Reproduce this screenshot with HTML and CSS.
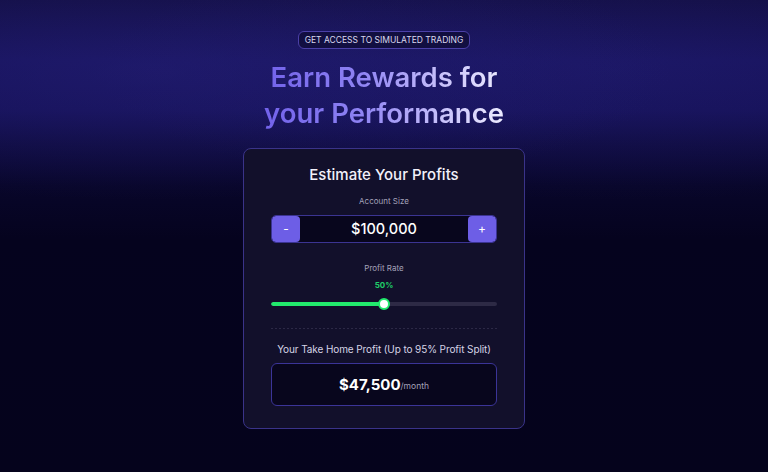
FILE: index.html
```html
<!DOCTYPE html>
<html lang="en">
<head>
<meta charset="utf-8">
<title>Earn Rewards for your Performance</title>
<link rel="stylesheet" href="styles.css">
</head>
<body>
<main class="page">
  <div class="pill">GET ACCESS TO SIMULATED TRADING</div>
  <h1 class="headline">Earn Rewards for<br>your Performance</h1>
  <section class="card">
    <h2 class="card-title">Estimate Your Profits</h2>
    <div class="label">Account Size</div>
    <div class="stepper">
      <button class="step-btn">-</button>
      <div class="step-value">$100,000</div>
      <button class="step-btn">+</button>
    </div>
    <div class="label label-rate">Profit Rate</div>
    <div class="rate">50%</div>
    <div class="slider">
      <div class="track">
        <div class="fill" style="width:50%"></div>
      </div>
      <div class="thumb" style="left:50%"></div>
    </div>
    <div class="divider"></div>
    <div class="take-home">Your Take Home Profit (Up to 95% Profit Split)</div>
    <div class="result">
      <span class="amount">$47,500</span><span class="per">/month</span>
    </div>
  </section>
</main>
</body>
</html>
```
FILE: styles.css
```css
* { box-sizing: border-box; }
html, body { margin: 0; padding: 0; }
body {
  width: 768px;
  height: 472px;
  overflow: hidden;
  font-family: "Inter", "Open Sans", sans-serif;
  color: #fff;
  background:
    radial-gradient(ellipse 520px 130px at 20% 70px, rgba(40, 34, 125, 0.45), rgba(40, 34, 125, 0) 100%),
    radial-gradient(ellipse 520px 130px at 80% 70px, rgba(40, 34, 125, 0.35), rgba(40, 34, 125, 0) 100%),
    linear-gradient(180deg, #120e42 0px, #16125a 60px, #141055 110px, #0e0b3e 145px, #08062a 185px, #05031e 240px, #05031c 472px);
}
.page {
  display: flex;
  flex-direction: column;
  align-items: center;
  padding-top: 31px;
}
.pill {
  height: 18px;
  padding: 0 6px;
  border: 1px solid #4b40a8;
  border-radius: 6px;
  background: rgba(12, 10, 44, 0.6);
  color: #d9d7ee;
  font-size: 8.5px;
  line-height: 16px;
}
.headline {
  margin: 10px 0 0;
  font-size: 27.5px;
  font-weight: 600;
  line-height: 36px;
  text-align: center;
  background: linear-gradient(90deg, #7262ea 0%, #8e82f3 40%, #c9c3fb 75%, #ecebff 100%);
  -webkit-background-clip: text;
  background-clip: text;
  color: transparent;
}
.card {
  margin-top: 17px;
  width: 282px;
  padding: 16px 27px 22px;
  border: 1px solid #3a3389;
  border-radius: 8px;
  background: #12102b;
  display: flex;
  flex-direction: column;
  align-items: stretch;
  text-align: center;
}
.card-title {
  margin: 0;
  font-size: 15px;
  font-weight: 500;
  line-height: 20px;
  color: #f2f1fa;
}
.label {
  margin-top: 10px;
  font-size: 8px;
  line-height: 12px;
  color: #a4a2b9;
}
.stepper {
  margin-top: 8px;
  height: 28px;
  display: flex;
  border: 1px solid #3b3492;
  border-radius: 5px;
  background: #08061d;
  overflow: hidden;
}
.step-btn {
  width: 28px;
  border: 0;
  padding: 0;
  background: #6d5ee6;
  color: #fff;
  font-family: inherit;
  font-size: 12px;
  line-height: 26px;
  border-radius: 4px;
}
.step-value {
  flex: 1;
  font-size: 14.5px;
  font-weight: 500;
  line-height: 26px;
  color: #fff;
}
.label-rate { margin-top: 19px; }
.rate {
  margin-top: 5px;
  font-size: 8px;
  font-weight: 700;
  line-height: 12px;
  color: #1fcf68;
}
.slider {
  position: relative;
  margin-top: 7px;
  height: 12px;
  display: flex;
  align-items: center;
}
.track {
  width: 100%;
  height: 4px;
  border-radius: 2px;
  background: #2d2a45;
  overflow: hidden;
}
.fill {
  height: 100%;
  background: #22ea6d;
  border-radius: 2px;
}
.thumb {
  position: absolute;
  top: 0;
  width: 12px;
  height: 12px;
  margin-left: -6px;
  border-radius: 50%;
  background: #fff;
  border: 2px solid #22ea6d;
}
.divider {
  margin-top: 18px;
  height: 1px;
  background: repeating-linear-gradient(90deg, #2c2946 0 2px, transparent 2px 4px);
}
.take-home {
  margin-top: 13px;
  font-size: 10px;
  line-height: 14px;
  color: #d6d4e6;
  white-space: nowrap;
  letter-spacing: -0.1px;
}
.result {
  margin-top: 7px;
  height: 43px;
  border: 1px solid #3b3498;
  border-radius: 6px;
  background: #08061d;
  display: flex;
  align-items: center;
  justify-content: center;
}
.amount {
  font-size: 15px;
  font-weight: 700;
  color: #fff;
}
.per {
  font-size: 8.5px;
  color: #a4a2b9;
  margin-top: 2px;
}
```
